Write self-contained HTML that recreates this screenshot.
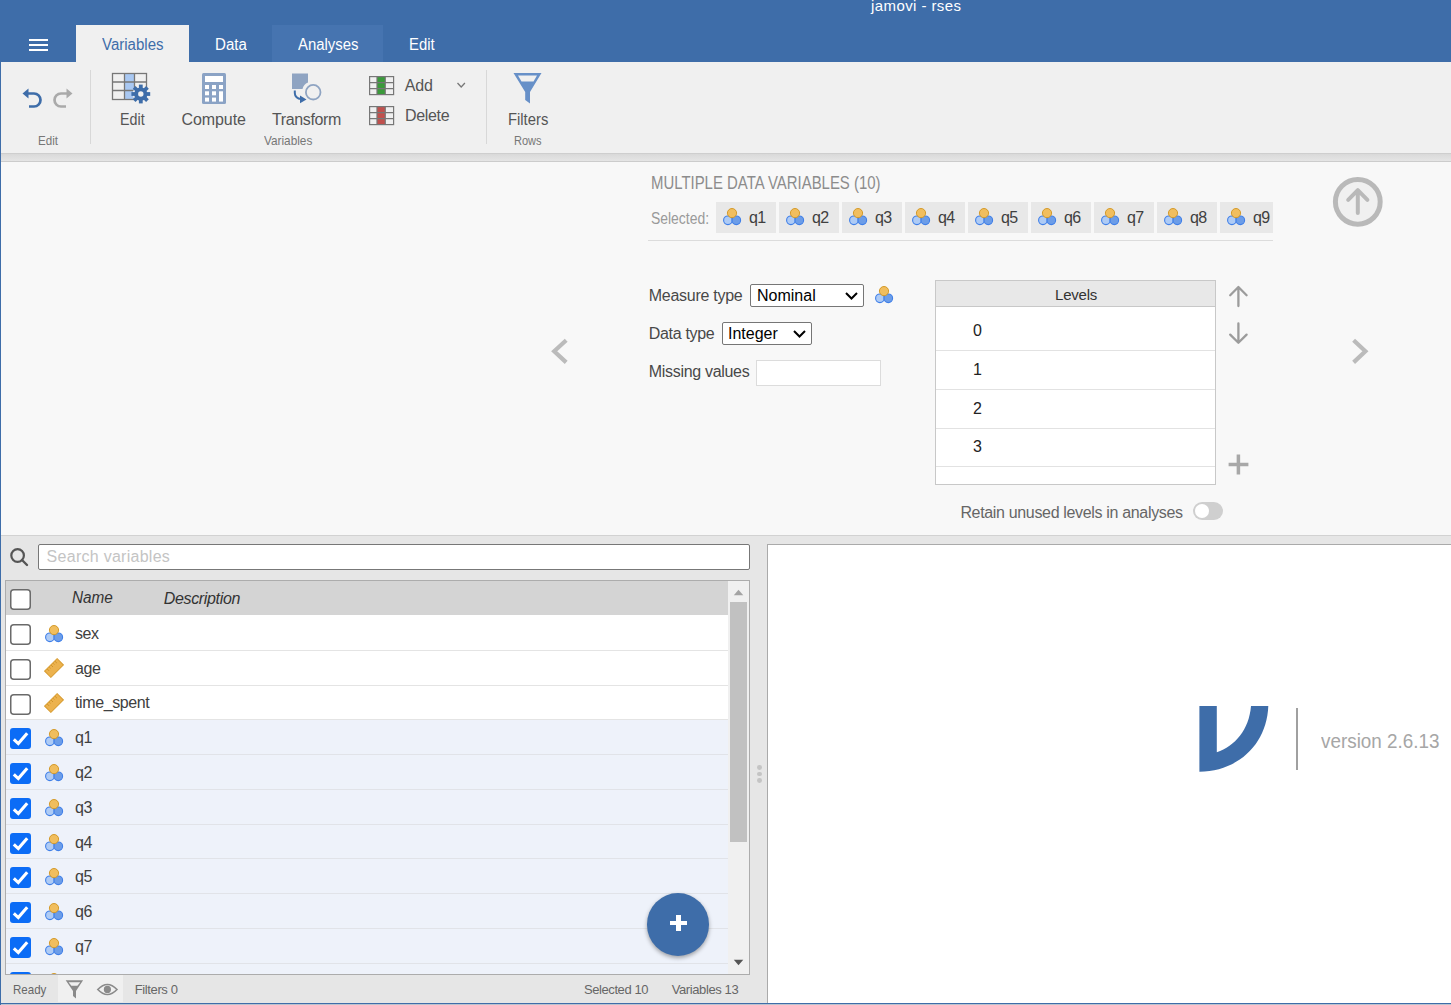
<!DOCTYPE html><html><head><meta charset="utf-8"><style>
html,body{margin:0;padding:0;width:1451px;height:1005px;overflow:hidden;background:#f8f8f8;font-family:"Liberation Sans",sans-serif;}
.t{position:absolute;white-space:nowrap;}
.b{position:absolute;}
svg.b{overflow:visible}
</style></head><body>
<svg width="0" height="0" style="position:absolute">
<defs>
<symbol id="nom" viewBox="0 0 20 20">
<circle cx="5.9" cy="12.3" r="4.3" fill="#aecbf5" stroke="#3f7fe8" stroke-width="1.1"/>
<circle cx="14.3" cy="12.3" r="4.3" fill="#6c9de8" stroke="#3f7fe8" stroke-width="1.1"/>
<circle cx="10" cy="5.1" r="4.6" fill="#f1be5e" stroke="#d49a2a" stroke-width="1"/>
</symbol>
<symbol id="ruler" viewBox="0 0 20 20">
<g transform="rotate(-45 10 10)"><rect x="1.2" y="5.6" width="17.6" height="8.8" fill="#ecb24e" stroke="#d89a2c" stroke-width="1"/>
<path d="M4.5 6V8.6 M7.3 6V7.8 M10 6V8.6 M12.7 6V7.8 M15.5 6V8.6" stroke="#c98d22" stroke-width="0.8"/></g>
</symbol>
<symbol id="chk" viewBox="0 0 21 21">
<rect x="0" y="0" width="21" height="21" rx="3" fill="#0b6cf6"/>
<path d="M3.8 11.4 L8.3 15.6 L17.2 5.3" fill="none" stroke="#fff" stroke-width="3.1"/>
</symbol>
<symbol id="unchk" viewBox="0 0 21 21">
<rect x="0.75" y="0.75" width="19.5" height="19.5" rx="3" fill="#fff" stroke="#6a6a6a" stroke-width="1.5"/>
</symbol>
</defs></svg>
<div class="b" style="left:0px;top:0px;width:1451px;height:62px;background:#3e6da9"></div>
<div class="t " style="left:871px;top:-2px;font-size:15px;line-height:15px;color:#fff;letter-spacing:0.417px;">jamovi - rses</div>
<div class="b" style="left:29px;top:39px;width:19px;height:2px;background:#fff"></div>
<div class="b" style="left:29px;top:44px;width:19px;height:2px;background:#fff"></div>
<div class="b" style="left:29px;top:49px;width:19px;height:2px;background:#fff"></div>
<div class="b" style="left:272px;top:25px;width:111px;height:37px;background:#4674b0"></div>
<div class="b" style="left:76px;top:25px;width:113px;height:37px;background:#f0f0f0"></div>
<div class="t " style="left:102.0px;top:37px;font-size:16px;line-height:16px;color:#3e6da9;transform:scaleX(0.9394);transform-origin:0 0;">Variables</div>
<div class="t " style="left:215.0px;top:37px;font-size:16px;line-height:16px;color:#fff;transform:scaleX(0.9412);transform-origin:0 0;">Data</div>
<div class="t " style="left:297.5px;top:37px;font-size:16px;line-height:16px;color:#fff;transform:scaleX(0.9308);transform-origin:0 0;">Analyses</div>
<div class="t " style="left:409.0px;top:37px;font-size:16px;line-height:16px;color:#fff;transform:scaleX(0.9286);transform-origin:0 0;">Edit</div>
<div class="b" style="left:0px;top:62px;width:1451px;height:91px;background:#f0f0f0"></div>
<div class="b" style="left:0px;top:153px;width:1451px;height:9px;background:linear-gradient(#cecece 0px,#cecece 1px,#d9d9d9 1px,#e5e5e5 8px,#cccccc 8px,#cccccc 9px)"></div>
<div class="b" style="left:90px;top:70px;width:1px;height:74px;background:#d8d8d8"></div>
<div class="b" style="left:486px;top:70px;width:1px;height:74px;background:#d8d8d8"></div>
<div class="t " style="left:37.5px;top:134px;font-size:13px;line-height:13px;color:#777;transform:scaleX(0.8913);transform-origin:0 0;">Edit</div>
<div class="t " style="left:119.5px;top:112px;font-size:16px;line-height:16px;color:#555;transform:scaleX(0.8929);transform-origin:0 0;">Edit</div>
<div class="t " style="left:181.5px;top:112px;font-size:16px;line-height:16px;color:#555;letter-spacing:-0.083px;">Compute</div>
<div class="t " style="left:272px;top:112px;font-size:16px;line-height:16px;color:#555;letter-spacing:-0.375px;">Transform</div>
<div class="t " style="left:264.0px;top:134px;font-size:13px;line-height:13px;color:#777;transform:scaleX(0.9074);transform-origin:0 0;">Variables</div>
<div class="t " style="left:404.7px;top:78px;font-size:16px;line-height:16px;color:#555;letter-spacing:-0.150px;">Add</div>
<div class="t " style="left:405px;top:108px;font-size:16px;line-height:16px;color:#555;letter-spacing:-0.340px;">Delete</div>
<div class="t " style="left:507.5px;top:112px;font-size:16px;line-height:16px;color:#555;transform:scaleX(0.9250);transform-origin:0 0;">Filters</div>
<div class="t " style="left:513.7px;top:134px;font-size:13px;line-height:13px;color:#777;transform:scaleX(0.8485);transform-origin:0 0;">Rows</div>
<svg class="b" style="left:0;top:62px" width="600" height="91" viewBox="0 62 600 91">
<g fill="none" stroke="#3e6da9" stroke-width="2.7"><path d="M28 93.5 H34 A6.5 6.5 0 0 1 34 106.5 H29"/></g>
<path d="M22.5 93.5 L28.5 88.5 V98.5 Z" fill="#3e6da9"/>
<g fill="none" stroke="#aaa" stroke-width="2.7"><path d="M67 93.5 H61 A6.5 6.5 0 0 0 61 106.5 H66"/></g>
<path d="M72.5 93.5 L66.5 88.5 V98.5 Z" fill="#aaa"/>
<rect x="125" y="73.5" width="9.5" height="26" fill="#a9c8f2"/>
<g fill="none" stroke="#777" stroke-width="1.3"><rect x="112.5" y="73.5" width="34" height="26"/>
<path d="M124.5 73.5V99.5 M134.5 73.5V99.5 M112.5 82H146.5 M112.5 90.5H146.5"/></g>
<g transform="translate(140.8 94)"><circle r="8.2" fill="#f0f0f0"/>
<g fill="#3e6da9"><circle r="6.6"/>
<rect x="-1.9" y="-9.4" width="3.8" height="18.8"/><rect x="-1.9" y="-9.4" width="3.8" height="18.8" transform="rotate(45)"/><rect x="-1.9" y="-9.4" width="3.8" height="18.8" transform="rotate(90)"/><rect x="-1.9" y="-9.4" width="3.8" height="18.8" transform="rotate(135)"/></g>
<circle r="2.7" fill="#f0f0f0"/></g>
<rect x="202" y="73" width="24" height="31" rx="1.5" fill="#8ba3c5"/>
<g fill="#fff"><rect x="205" y="76" width="18" height="6"/>
<rect x="205" y="85" width="4" height="4"/><rect x="212" y="85" width="4" height="4"/><rect x="219" y="85" width="4" height="4"/>
<rect x="205" y="91.3" width="4" height="4"/><rect x="212" y="91.3" width="4" height="4"/><rect x="219" y="91.3" width="4" height="10.3"/>
<rect x="205" y="97.6" width="4" height="4"/><rect x="212" y="97.6" width="4" height="4"/></g>
<path d="M292 73.5 H308 V82.5 A9.5 9.5 0 0 0 302.5 89 H292 Z" fill="#8fa4c2"/>
<circle cx="313.2" cy="92.2" r="7.3" fill="none" stroke="#8fa4c2" stroke-width="1.8"/>
<path d="M294.8 90.5 V93 A6 6 0 0 0 301 99" fill="none" stroke="#3e6da9" stroke-width="2"/>
<path d="M300 95.5 L306.5 99.6 L300 103.3 Z" fill="#3e6da9"/>
<rect x="377" y="76.5" width="8" height="18" fill="#3a9a3a"/>
<rect x="377" y="106.5" width="8" height="18" fill="#c0504d"/>
<g fill="none" stroke="#777" stroke-width="1.2">
<rect x="369.6" y="76.6" width="24" height="18"/><path d="M377 76.6V94.6 M385.3 76.6V94.6 M369.6 82.6H393.6 M369.6 88.6H393.6"/>
<rect x="369.6" y="106.6" width="24" height="18"/><path d="M377 106.6V124.6 M385.3 106.6V124.6 M369.6 112.6H393.6 M369.6 118.6H393.6"/>
</g>
<path d="M457.5 83 L461.2 87 L464.9 83" fill="none" stroke="#777" stroke-width="1.3"/>
<path d="M513.5 73 H541.5 L530 92 V103.6 L525.2 100 V92 Z" fill="#6790c8"/>
<path d="M518 75.5 H537 L533.5 81.6 H521.5 Z" fill="#f0f0f0"/>
</svg>
<div class="b" style="left:0px;top:162px;width:1451px;height:373px;background:#f8f8f8"></div>
<div class="b" style="left:0px;top:535px;width:1451px;height:1px;background:#d2d2d2"></div>
<div class="t " style="left:650.8px;top:174px;font-size:18px;line-height:18px;color:#8c8c8c;transform:scaleX(0.8292);transform-origin:0 0;">MULTIPLE DATA VARIABLES (10)</div>
<div class="t " style="left:650.8px;top:211px;font-size:16px;line-height:16px;color:#9a9a9a;transform:scaleX(0.8701);transform-origin:0 0;">Selected:</div>
<div class="b" style="left:648px;top:202px;width:625px;height:31px;overflow:hidden"><div class="b" style="left:68px;top:0;width:59.5px;height:31px;background:#e8e8e8"></div><svg class="b" style="left:74px;top:6px" width="20" height="20"><use href="#nom"/></svg><div class="b" style="left:131px;top:0;width:59.5px;height:31px;background:#e8e8e8"></div><svg class="b" style="left:137px;top:6px" width="20" height="20"><use href="#nom"/></svg><div class="b" style="left:194px;top:0;width:59.5px;height:31px;background:#e8e8e8"></div><svg class="b" style="left:200px;top:6px" width="20" height="20"><use href="#nom"/></svg><div class="b" style="left:257px;top:0;width:59.5px;height:31px;background:#e8e8e8"></div><svg class="b" style="left:263px;top:6px" width="20" height="20"><use href="#nom"/></svg><div class="b" style="left:320px;top:0;width:59.5px;height:31px;background:#e8e8e8"></div><svg class="b" style="left:326px;top:6px" width="20" height="20"><use href="#nom"/></svg><div class="b" style="left:383px;top:0;width:59.5px;height:31px;background:#e8e8e8"></div><svg class="b" style="left:389px;top:6px" width="20" height="20"><use href="#nom"/></svg><div class="b" style="left:446px;top:0;width:59.5px;height:31px;background:#e8e8e8"></div><svg class="b" style="left:452px;top:6px" width="20" height="20"><use href="#nom"/></svg><div class="b" style="left:509px;top:0;width:59.5px;height:31px;background:#e8e8e8"></div><svg class="b" style="left:515px;top:6px" width="20" height="20"><use href="#nom"/></svg><div class="b" style="left:572px;top:0;width:59.5px;height:31px;background:#e8e8e8"></div><svg class="b" style="left:578px;top:6px" width="20" height="20"><use href="#nom"/></svg></div>
<div class="t " style="left:749px;top:210px;font-size:16px;line-height:16px;color:#404040;letter-spacing:-0.6px">q1</div>
<div class="t " style="left:812px;top:210px;font-size:16px;line-height:16px;color:#404040;letter-spacing:-0.6px">q2</div>
<div class="t " style="left:875px;top:210px;font-size:16px;line-height:16px;color:#404040;letter-spacing:-0.6px">q3</div>
<div class="t " style="left:938px;top:210px;font-size:16px;line-height:16px;color:#404040;letter-spacing:-0.6px">q4</div>
<div class="t " style="left:1001px;top:210px;font-size:16px;line-height:16px;color:#404040;letter-spacing:-0.6px">q5</div>
<div class="t " style="left:1064px;top:210px;font-size:16px;line-height:16px;color:#404040;letter-spacing:-0.6px">q6</div>
<div class="t " style="left:1127px;top:210px;font-size:16px;line-height:16px;color:#404040;letter-spacing:-0.6px">q7</div>
<div class="t " style="left:1190px;top:210px;font-size:16px;line-height:16px;color:#404040;letter-spacing:-0.6px">q8</div>
<div class="t " style="left:1253px;top:210px;font-size:16px;line-height:16px;color:#404040;letter-spacing:-0.6px">q9</div>
<div class="b" style="left:648px;top:240px;width:625px;height:1px;background:#dcdcdc"></div>
<svg class="b" style="left:1328px;top:172px" width="60" height="60" viewBox="1328 172 60 60">
<circle cx="1357.8" cy="201.8" r="22.4" fill="#f0f0f0" stroke="#b9b9b9" stroke-width="5"/>
<path d="M1357.8 213 V190.5 M1348.2 199.8 L1357.8 190.2 L1367.4 199.8" fill="none" stroke="#b9b9b9" stroke-width="4" stroke-linecap="round" stroke-linejoin="round"/>
</svg>
<div class="t " style="left:648.8px;top:288px;font-size:16px;line-height:16px;color:#484848;letter-spacing:-0.273px;">Measure type</div>
<div class="t " style="left:648.8px;top:326px;font-size:16px;line-height:16px;color:#484848;letter-spacing:-0.325px;">Data type</div>
<div class="t " style="left:648.8px;top:364px;font-size:16px;line-height:16px;color:#484848;letter-spacing:-0.315px;">Missing values</div>
<div class="b" style="left:750px;top:284px;width:114px;height:23px;box-sizing:border-box;border:1px solid #767676;border-radius:2px;background:#fff"></div>
<div class="t " style="left:757px;top:288px;font-size:16px;line-height:16px;color:#000;">Nominal</div>
<div class="b" style="left:722px;top:322px;width:90px;height:23px;box-sizing:border-box;border:1px solid #767676;border-radius:2px;background:#fff"></div>
<div class="t " style="left:728px;top:326px;font-size:16px;line-height:16px;color:#000;">Integer</div>
<svg class="b" style="left:0;top:0" width="900" height="400" viewBox="0 0 900 400">
<path d="M846 293 L851.5 298.5 L857 293" fill="none" stroke="#000" stroke-width="2"/>
<path d="M794 331 L799.5 336.5 L805 331" fill="none" stroke="#000" stroke-width="2"/>
<path d="M566.2 340.2 L554.2 351.3 L566.2 362.4" fill="none" stroke="#bbbbbb" stroke-width="4.2"/>
</svg>
<svg class="b" style="left:874px;top:286px" width="20" height="20"><use href="#nom"/></svg>
<div class="b" style="left:756px;top:360px;width:125px;height:26px;box-sizing:border-box;border:1px solid #dcdcdc;background:#fff"></div>
<div class="b" style="left:935px;top:280px;width:281px;height:205px;box-sizing:border-box;border:1px solid #c8c8c8;background:#fff"></div>
<div class="b" style="left:936px;top:281px;width:279px;height:25px;background:#e8e8e8"></div>
<div class="b" style="left:936px;top:306px;width:279px;height:1px;background:#c8c8c8"></div>
<div class="b" style="left:936px;top:350px;width:279px;height:1px;background:#e2e2e2"></div>
<div class="b" style="left:936px;top:389px;width:279px;height:1px;background:#e2e2e2"></div>
<div class="b" style="left:936px;top:428px;width:279px;height:1px;background:#e2e2e2"></div>
<div class="b" style="left:936px;top:466px;width:279px;height:1px;background:#e2e2e2"></div>
<div class="t " style="left:1055px;top:287px;font-size:15px;line-height:15px;color:#333;letter-spacing:-0.200px;">Levels</div>
<div class="t " style="left:973px;top:323px;font-size:16px;line-height:16px;color:#222;">0</div>
<div class="t " style="left:973px;top:362px;font-size:16px;line-height:16px;color:#222;">1</div>
<div class="t " style="left:973px;top:401px;font-size:16px;line-height:16px;color:#222;">2</div>
<div class="t " style="left:973px;top:439px;font-size:16px;line-height:16px;color:#222;">3</div>
<svg class="b" style="left:1220px;top:280px" width="160" height="200" viewBox="1220 280 160 200">
<g fill="none" stroke="#9c9c9c" stroke-width="2.3" stroke-linecap="round" stroke-linejoin="round">
<path d="M1238.4 306 V287.5 M1230.2 295.2 L1238.4 287 L1246.6 295.2"/>
<path d="M1238.4 323.5 V342 M1230.2 334.6 L1238.4 342.8 L1246.6 334.6"/></g><g fill="none" stroke="#a8a8a8" stroke-width="2.6">
<path d="M1238.4 454.5 V474.5 M1228.6 464.5 H1248.4" stroke-width="3.5"/>
<path d="M1353.6 340.2 L1365.4 351.3 L1353.6 362.4" stroke="#bbbbbb" stroke-width="4.2"/>
</g></svg>
<div class="t " style="left:960.4px;top:505px;font-size:16px;line-height:16px;color:#666;letter-spacing:-0.335px;">Retain unused levels in analyses</div>
<div class="b" style="left:1193px;top:502px;width:30px;height:18px;border-radius:9px;background:#cfcfcf"></div>
<div class="b" style="left:1195px;top:504px;width:14px;height:14px;border-radius:7px;background:#fff"></div>
<div class="b" style="left:0px;top:536px;width:1451px;height:467px;background:#e6e6e6"></div>
<svg class="b" style="left:5px;top:545px" width="30" height="30" viewBox="5 545 30 30">
<circle cx="17.6" cy="555.5" r="6.3" fill="none" stroke="#555" stroke-width="2.2"/>
<path d="M22 560 L27 565" stroke="#555" stroke-width="2.4" stroke-linecap="round"/></svg>
<div class="b" style="left:38px;top:544px;width:712px;height:26px;box-sizing:border-box;border:1px solid #777;border-radius:2px;background:#fff"></div>
<div class="t " style="left:46.6px;top:549px;font-size:16px;line-height:16px;color:#c4c4c4;letter-spacing:0.273px;">Search variables</div>
<div class="b" style="left:5px;top:580px;width:745px;height:395px;box-sizing:border-box;border:1px solid #acacac;background:#fff"></div>
<div class="b" style="left:6px;top:581px;width:722px;height:34px;background:#d4d4d4"></div>
<div class="b" style="left:728px;top:581px;width:21px;height:393px;background:#f0f0f0"></div>
<div class="b" style="left:730px;top:602px;width:17px;height:240px;background:#c1c1c1"></div>
<svg class="b" style="left:728px;top:581px" width="21" height="393" viewBox="728 581 21 393">
<path d="M733.8 595.2 L738.5 589.8 L743.3 595.2 Z" fill="#a3a3a3"/>
<path d="M733.8 959.8 L738.5 965.2 L743.3 959.8 Z" fill="#555"/></svg>
<svg class="b" style="left:10px;top:589px" width="21" height="21"><use href="#unchk"/></svg>
<div class="t " style="left:71.6px;top:590px;font-size:16px;line-height:16px;color:#333;transform:scaleX(0.9581);transform-origin:0 0;font-style:italic;">Name</div>
<div class="t " style="left:163.7px;top:591px;font-size:16px;line-height:16px;color:#333;letter-spacing:-0.330px;font-style:italic;">Description</div>
<div class="b" style="left:6px;top:615px;width:722px;height:35px;background:#fff"></div>
<svg class="b" style="left:10px;top:624px" width="21" height="21"><use href="#unchk"/></svg>
<svg class="b" style="left:44px;top:625px" width="20" height="20"><use href="#nom"/></svg>
<div class="t " style="left:75px;top:626px;font-size:16px;line-height:16px;color:#404040;letter-spacing:-0.4px">sex</div>
<div class="b" style="left:6px;top:650px;width:722px;height:35px;background:#fff"></div>
<svg class="b" style="left:10px;top:659px" width="21" height="21"><use href="#unchk"/></svg>
<svg class="b" style="left:44px;top:658px" width="20" height="20"><use href="#ruler"/></svg>
<div class="t " style="left:75px;top:661px;font-size:16px;line-height:16px;color:#404040;letter-spacing:-0.4px">age</div>
<div class="b" style="left:6px;top:685px;width:722px;height:34px;background:#fff"></div>
<svg class="b" style="left:10px;top:694px" width="21" height="21"><use href="#unchk"/></svg>
<svg class="b" style="left:44px;top:693px" width="20" height="20"><use href="#ruler"/></svg>
<div class="t " style="left:75px;top:695px;font-size:16px;line-height:16px;color:#404040;letter-spacing:-0.4px">time_spent</div>
<div class="b" style="left:6px;top:719px;width:722px;height:35px;background:#eef2fa"></div>
<svg class="b" style="left:10px;top:728px" width="21" height="21"><use href="#chk"/></svg>
<svg class="b" style="left:44px;top:729px" width="20" height="20"><use href="#nom"/></svg>
<div class="t " style="left:75px;top:730px;font-size:16px;line-height:16px;color:#404040;letter-spacing:-0.4px">q1</div>
<div class="b" style="left:6px;top:754px;width:722px;height:35px;background:#eef2fa"></div>
<svg class="b" style="left:10px;top:763px" width="21" height="21"><use href="#chk"/></svg>
<svg class="b" style="left:44px;top:764px" width="20" height="20"><use href="#nom"/></svg>
<div class="t " style="left:75px;top:765px;font-size:16px;line-height:16px;color:#404040;letter-spacing:-0.4px">q2</div>
<div class="b" style="left:6px;top:789px;width:722px;height:35px;background:#eef2fa"></div>
<svg class="b" style="left:10px;top:798px" width="21" height="21"><use href="#chk"/></svg>
<svg class="b" style="left:44px;top:799px" width="20" height="20"><use href="#nom"/></svg>
<div class="t " style="left:75px;top:800px;font-size:16px;line-height:16px;color:#404040;letter-spacing:-0.4px">q3</div>
<div class="b" style="left:6px;top:824px;width:722px;height:34px;background:#eef2fa"></div>
<svg class="b" style="left:10px;top:833px" width="21" height="21"><use href="#chk"/></svg>
<svg class="b" style="left:44px;top:834px" width="20" height="20"><use href="#nom"/></svg>
<div class="t " style="left:75px;top:835px;font-size:16px;line-height:16px;color:#404040;letter-spacing:-0.4px">q4</div>
<div class="b" style="left:6px;top:858px;width:722px;height:35px;background:#eef2fa"></div>
<svg class="b" style="left:10px;top:867px" width="21" height="21"><use href="#chk"/></svg>
<svg class="b" style="left:44px;top:868px" width="20" height="20"><use href="#nom"/></svg>
<div class="t " style="left:75px;top:869px;font-size:16px;line-height:16px;color:#404040;letter-spacing:-0.4px">q5</div>
<div class="b" style="left:6px;top:893px;width:722px;height:35px;background:#eef2fa"></div>
<svg class="b" style="left:10px;top:902px" width="21" height="21"><use href="#chk"/></svg>
<svg class="b" style="left:44px;top:903px" width="20" height="20"><use href="#nom"/></svg>
<div class="t " style="left:75px;top:904px;font-size:16px;line-height:16px;color:#404040;letter-spacing:-0.4px">q6</div>
<div class="b" style="left:6px;top:928px;width:722px;height:35px;background:#eef2fa"></div>
<svg class="b" style="left:10px;top:937px" width="21" height="21"><use href="#chk"/></svg>
<svg class="b" style="left:44px;top:938px" width="20" height="20"><use href="#nom"/></svg>
<div class="t " style="left:75px;top:939px;font-size:16px;line-height:16px;color:#404040;letter-spacing:-0.4px">q7</div>
<div class="b" style="left:6px;top:963px;width:722px;height:11px;background:#eef2fa"></div>
<svg class="b" style="left:10px;top:972px" width="21" height="21"><use href="#chk"/></svg>
<svg class="b" style="left:44px;top:973px" width="20" height="20"><use href="#nom"/></svg>
<div class="t " style="left:75px;top:973px;font-size:16px;line-height:16px;color:#404040;letter-spacing:-0.4px">q8</div>
<div class="b" style="left:6px;top:650px;width:722px;height:1px;background:#e4e4e4"></div>
<div class="b" style="left:6px;top:685px;width:722px;height:1px;background:#e4e4e4"></div>
<div class="b" style="left:6px;top:719px;width:722px;height:1px;background:#e4e4e4"></div>
<div class="b" style="left:6px;top:754px;width:722px;height:1px;background:#e1e3e8"></div>
<div class="b" style="left:6px;top:789px;width:722px;height:1px;background:#e1e3e8"></div>
<div class="b" style="left:6px;top:824px;width:722px;height:1px;background:#e1e3e8"></div>
<div class="b" style="left:6px;top:858px;width:722px;height:1px;background:#e1e3e8"></div>
<div class="b" style="left:6px;top:893px;width:722px;height:1px;background:#e1e3e8"></div>
<div class="b" style="left:6px;top:928px;width:722px;height:1px;background:#e1e3e8"></div>
<div class="b" style="left:6px;top:963px;width:722px;height:1px;background:#e1e3e8"></div>
<div class="b" style="left:6px;top:974px;width:722px;height:1px;background:#acacac"></div>
<div class="b" style="left:647px;top:893px;width:62px;height:62.6px;border-radius:50%;background:#3e6da9;box-shadow:0 2px 4px rgba(0,0,0,0.35)"></div>
<div class="b" style="left:669.6px;top:921px;width:17px;height:4.2px;background:#fff"></div>
<div class="b" style="left:675.6px;top:915px;width:5.2px;height:16.2px;background:#fff"></div>
<div class="b" style="left:0px;top:975px;width:1451px;height:28px;background:#e6e6e6"></div>
<div class="b" style="left:58px;top:975px;width:65px;height:27px;background:#f0f0f0"></div>
<div class="t " style="left:13.1px;top:983px;font-size:13px;line-height:13px;color:#666;transform:scaleX(0.8868);transform-origin:0 0;">Ready</div>
<div class="t " style="left:134.8px;top:983px;font-size:13px;line-height:13px;color:#666;letter-spacing:-0.388px;">Filters 0</div>
<div class="t " style="left:584px;top:983px;font-size:13px;line-height:13px;color:#666;letter-spacing:-0.420px;">Selected 10</div>
<div class="t " style="left:671.7px;top:983px;font-size:13px;line-height:13px;color:#666;letter-spacing:-0.391px;">Variables 13</div>
<svg class="b" style="left:60px;top:976px" width="65" height="26" viewBox="60 976 65 26">
<path d="M65.7 980.3 H83.1 L76 991 V998.6 L73 996 V991 Z" fill="#8a8a8a"/>
<path d="M68.6 982.2 H80.2 L77.4 985.7 H71.4 Z" fill="#f0f0f0"/>
<path d="M97.8 989.5 Q107.4 979.5 117 989.5 Q107.4 999.5 97.8 989.5 Z" fill="none" stroke="#8a8a8a" stroke-width="1.6"/>
<circle cx="107.4" cy="989.4" r="3.6" fill="#8a8a8a"/></svg>
<div class="b" style="left:0px;top:1003px;width:1451px;height:1px;background:#3e6da9"></div>
<div class="b" style="left:0px;top:1004px;width:1451px;height:1px;background:#bcc3cf"></div>
<div class="b" style="left:767px;top:544px;width:684px;height:459px;box-sizing:border-box;border-left:1px solid #aaaaaa;border-top:1px solid #aaaaaa;background:#fff"></div>
<div class="b" style="left:757px;top:765.2px;width:4.8px;height:4.8px;border-radius:50%;background:#c4c4c4"></div>
<div class="b" style="left:757px;top:771.7px;width:4.8px;height:4.8px;border-radius:50%;background:#c4c4c4"></div>
<div class="b" style="left:757px;top:778.2px;width:4.8px;height:4.8px;border-radius:50%;background:#c4c4c4"></div>
<svg class="b" style="left:1190px;top:700px" width="90" height="80" viewBox="1190 700 90 80">
<path d="M1199.4 706 H1216.8 V752.2 C1235 746 1249 730 1251 706 H1268.3 C1267 744 1238 771.5 1199.4 771.7 Z" fill="#3e6da9"/></svg>
<div class="b" style="left:1296px;top:708px;width:2px;height:62px;background:#a0a0a0"></div>
<div class="t " style="left:1320.5px;top:731px;font-size:20px;line-height:20px;color:#a6a6a6;transform:scaleX(0.9437);transform-origin:0 0;">version 2.6.13</div>
<div class="b" style="left:0px;top:0px;width:1px;height:1005px;background:#3e6da9"></div>
</body></html>
